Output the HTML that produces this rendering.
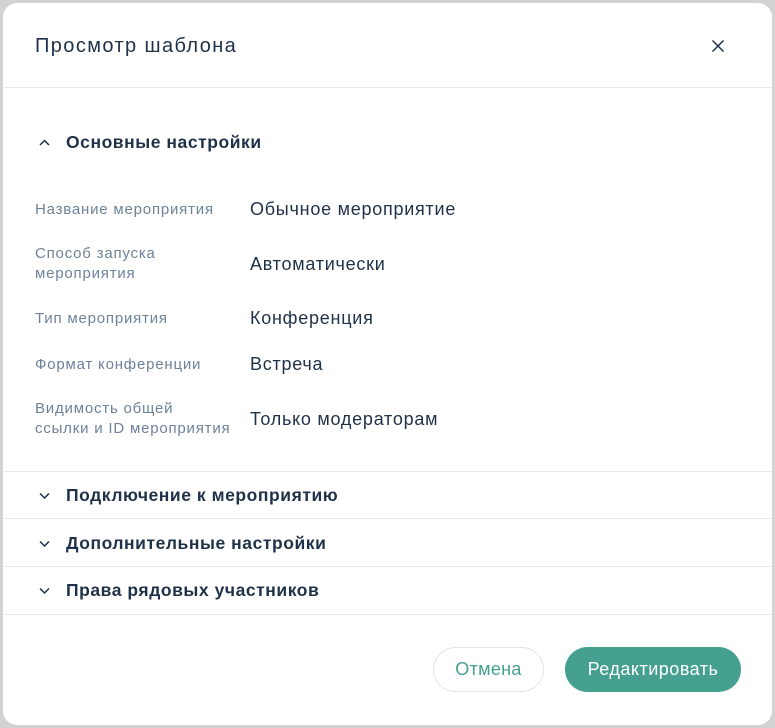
<!DOCTYPE html>
<html><head><meta charset="utf-8"><style>
*{margin:0;padding:0;box-sizing:border-box}
body{width:775px;height:728px;background:#d2d2d2;font-family:"Liberation Sans","DejaVu Sans",sans-serif;position:relative;overflow:hidden}
.card{position:absolute;left:3px;top:3px;width:769px;height:722px;background:#fff;border-radius:14px}
.a{position:absolute;white-space:nowrap}
.hr{position:absolute;left:0;width:769px;height:1px;background:#e6ebf1}
.title{color:#1f3148;font-size:20px;letter-spacing:1.4px}
.sec{color:#1f3148;font-size:17.5px;font-weight:bold;letter-spacing:0.55px}
.lbl{color:#6e829a;font-size:15px;line-height:20px;letter-spacing:0.8px}
.val{color:#1f3148;font-size:18px;letter-spacing:0.75px}
</style></head><body>
<div class="card">
<div class="a title" style="left:32px;top:32px">Просмотр шаблона</div>
<svg class="a" style="left:708px;top:36px" width="14" height="14" viewBox="0 0 14 14"><path d="M1.5 1.5L12.5 12.5M12.5 1.5L1.5 12.5" stroke="#1f3148" stroke-width="1.5" fill="none"/></svg>
<div class="hr" style="top:84px"></div>

<svg class="a" style="left:35px;top:135px" width="13" height="9" viewBox="0 0 13 9"><path d="M2 7L6.5 2.5L11 7" stroke="#1f3148" stroke-width="1.5" fill="none"/></svg>
<div class="a sec" style="left:63px;top:129px">Основные настройки</div>

<div class="a lbl" style="left:32px;top:197px">Название мероприятия</div>
<div class="a val" style="left:247px;top:196px">Обычное мероприятие</div>
<div class="a lbl" style="left:32px;top:241px">Способ запуска<br>мероприятия</div>
<div class="a val" style="left:247px;top:251px">Автоматически</div>
<div class="a lbl" style="left:32px;top:306px">Тип мероприятия</div>
<div class="a val" style="left:247px;top:305px">Конференция</div>
<div class="a lbl" style="left:32px;top:352px">Формат конференции</div>
<div class="a val" style="left:247px;top:351px">Встреча</div>
<div class="a lbl" style="left:32px;top:396px">Видимость общей<br>ссылки и ID мероприятия</div>
<div class="a val" style="left:247px;top:406px">Только модераторам</div>

<div class="hr" style="top:468px"></div>
<svg class="a" style="left:35px;top:488px" width="13" height="9" viewBox="0 0 13 9"><path d="M2 2.5L6.5 7L11 2.5" stroke="#1f3148" stroke-width="1.5" fill="none"/></svg>
<div class="a sec" style="left:63px;top:482px">Подключение к мероприятию</div>
<div class="hr" style="top:515px"></div>
<svg class="a" style="left:35px;top:536px" width="13" height="9" viewBox="0 0 13 9"><path d="M2 2.5L6.5 7L11 2.5" stroke="#1f3148" stroke-width="1.5" fill="none"/></svg>
<div class="a sec" style="left:63px;top:530px">Дополнительные настройки</div>
<div class="hr" style="top:563px"></div>
<svg class="a" style="left:35px;top:583px" width="13" height="9" viewBox="0 0 13 9"><path d="M2 2.5L6.5 7L11 2.5" stroke="#1f3148" stroke-width="1.5" fill="none"/></svg>
<div class="a sec" style="left:63px;top:577px">Права рядовых участников</div>
<div class="hr" style="top:611px"></div>

<div class="a" style="left:430px;top:644px;width:111px;height:45px;border:1px solid #dfe6ef;border-radius:23px;color:#45a090;font-size:18px;text-align:center;line-height:43px;letter-spacing:0.3px">Отмена</div>
<div class="a" style="left:562px;top:644px;width:176px;height:45px;background:#45a090;border-radius:23px;color:#fff;font-size:18px;text-align:center;line-height:45px;letter-spacing:0.5px">Редактировать</div>
</div>
</body></html>
